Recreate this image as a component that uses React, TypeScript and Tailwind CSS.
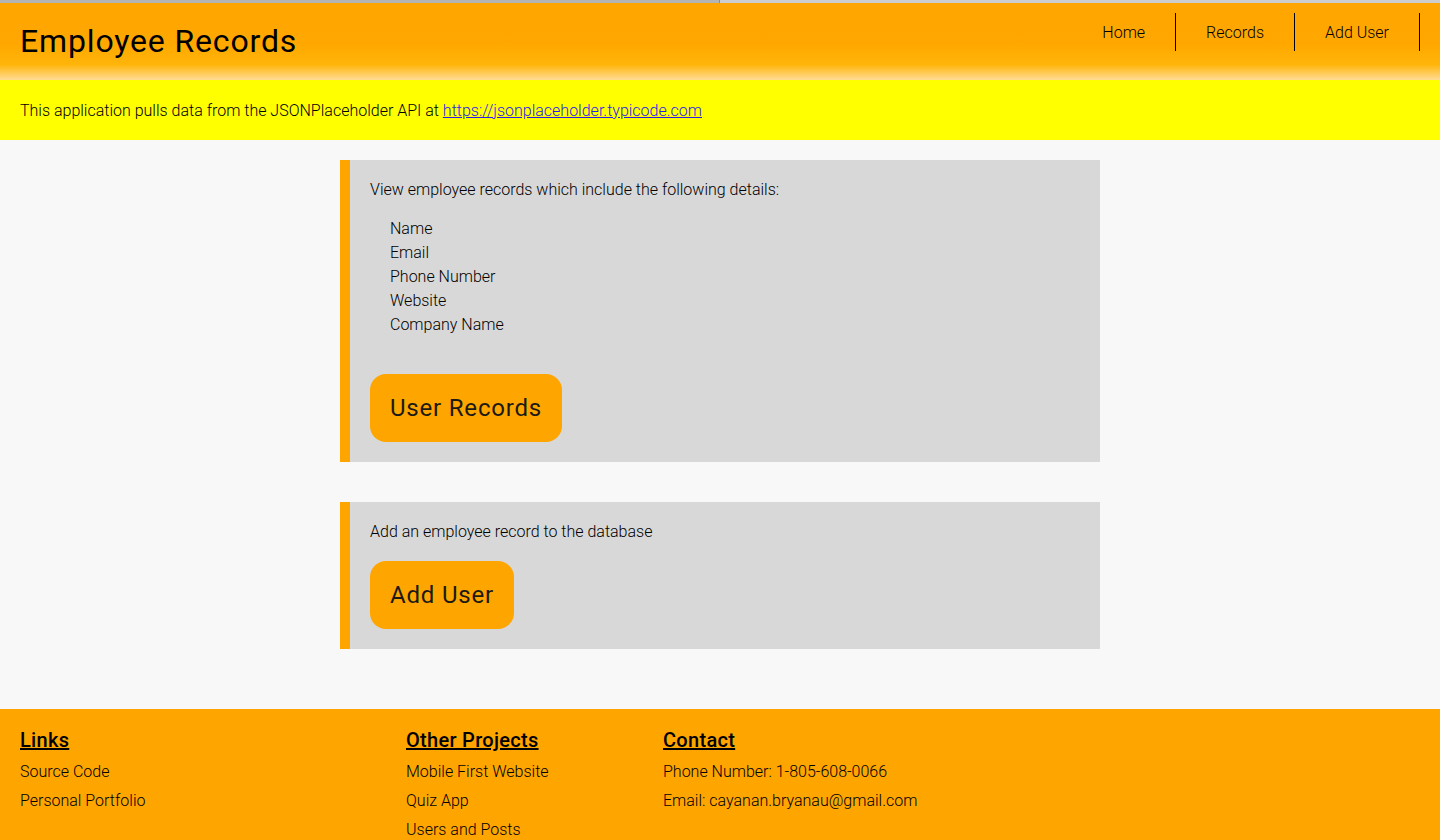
import React from "react";

const font = { fontFamily: "Roboto, 'Noto Sans', sans-serif" };

function Card({ children }: { children: React.ReactNode }) {
  return (
    <div className="w-[760px] bg-[#d8d8d8] border-l-[10px] border-[#ffa500] px-[20px] py-[20px]">
      {children}
    </div>
  );
}

function Btn({ label }: { label: string }) {
  return (
    <button className="bg-[#ffa500] rounded-[16px] px-[20px] py-[20px] text-[24px] leading-[28px] tracking-[0.8px] font-normal text-[#1c1a14]">
      {label}
    </button>
  );
}

export default function App() {
  const nav = ["Home", "Records", "Add User"];
  return (
    <div style={font} className="min-h-screen bg-[#f8f8f8] text-black font-light">
      <div className="flex h-[3px]">
        <div className="w-[719px] bg-[#b4b4b4]" />
        <div className="w-px bg-[#8a8a8a]" />
        <div className="flex-1 bg-[#cdcdcd]" />
      </div>
      <header className="h-[77px] flex items-start justify-between pl-[20px] pr-[20px] bg-[linear-gradient(to_bottom,#ffa500_0%,#ffa800_55%,#ffb50a_80%,#ffdb95_100%)]">
        <h1 className="text-[32px] leading-[38px] tracking-[0.85px] font-normal mt-[19px]">Employee Records</h1>
        <nav className="flex mt-[10px]">
          {nav.map((n) => (
            <a key={n} className="h-[38px] flex items-center pt-[1px] px-[30px] border-r border-black text-[16px]">
              {n}
            </a>
          ))}
        </nav>
      </header>
      <div className="h-[60px] bg-[#ffff00] flex items-center pt-[2px] px-[20px] text-[16px]">
        <span>
          This application pulls data from the JSONPlaceholder API at{" "}
          <a className="text-[#2a1ee8] underline">https://jsonplaceholder.typicode.com</a>
        </span>
      </div>
      <main className="flex flex-col items-center pt-[20px] pb-[60px] gap-[40px]">
        <Card>
          <p className="text-[16px] leading-[19px]">View employee records which include the following details:</p>
          <ul className="mt-[18px] pl-[20px] text-[16px] leading-[24px]">
            <li>Name</li>
            <li>Email</li>
            <li>Phone Number</li>
            <li>Website</li>
            <li>Company Name</li>
          </ul>
          <div className="mt-[37px] flex">
            <Btn label="User Records" />
          </div>
        </Card>
        <Card>
          <p className="text-[16px] leading-[19px]">Add an employee record to the database</p>
          <div className="mt-[20px] flex">
            <Btn label="Add User" />
          </div>
        </Card>
      </main>
      <footer className="bg-[#ffa500] flex px-[20px] pt-[20px] pb-[20px]">
        <div className="w-[386px] flex flex-col gap-[10px]">
          <h3 className="text-[20px] leading-[23px] tracking-[0.3px] font-medium underline">Links</h3>
          <a className="text-[16px] leading-[19px]">Source Code</a>
          <a className="text-[16px] leading-[19px]">Personal Portfolio</a>
        </div>
        <div className="w-[257px] flex flex-col gap-[10px]">
          <h3 className="text-[20px] leading-[23px] tracking-[0.3px] font-medium underline">Other Projects</h3>
          <a className="text-[16px] leading-[19px]">Mobile First Website</a>
          <a className="text-[16px] leading-[19px]">Quiz App</a>
          <a className="text-[16px] leading-[19px]">Users and Posts</a>
        </div>
        <div className="flex flex-col gap-[10px]">
          <h3 className="text-[20px] leading-[23px] tracking-[0.3px] font-medium underline">Contact</h3>
          <p className="text-[16px] leading-[19px]">Phone Number: 1-805-608-0066</p>
          <p className="text-[16px] leading-[19px]">Email: cayanan.bryanau@gmail.com</p>
        </div>
      </footer>
    </div>
  );
}
